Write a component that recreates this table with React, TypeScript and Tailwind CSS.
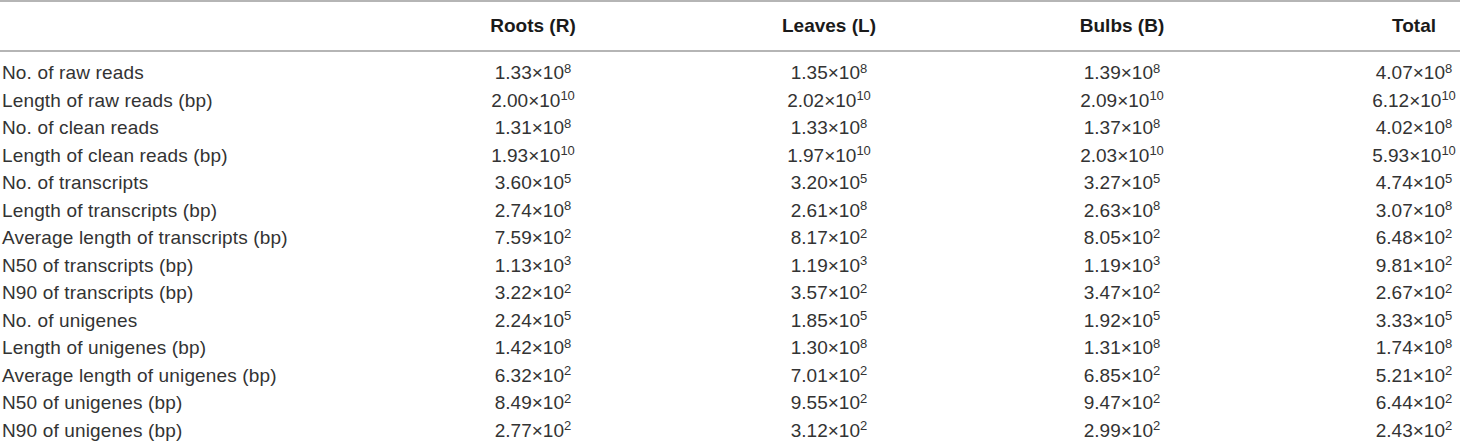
import React from 'react'

interface Row {
  label: string
  values: [string, string][]
}

// mantissa, exponent pairs for Roots, Leaves, Bulbs, Total
const rows: Row[] = [
  { label: 'No. of raw reads', values: [['1.33', '8'], ['1.35', '8'], ['1.39', '8'], ['4.07', '8']] },
  { label: 'Length of raw reads (bp)', values: [['2.00', '10'], ['2.02', '10'], ['2.09', '10'], ['6.12', '10']] },
  { label: 'No. of clean reads', values: [['1.31', '8'], ['1.33', '8'], ['1.37', '8'], ['4.02', '8']] },
  { label: 'Length of clean reads (bp)', values: [['1.93', '10'], ['1.97', '10'], ['2.03', '10'], ['5.93', '10']] },
  { label: 'No. of transcripts', values: [['3.60', '5'], ['3.20', '5'], ['3.27', '5'], ['4.74', '5']] },
  { label: 'Length of transcripts (bp)', values: [['2.74', '8'], ['2.61', '8'], ['2.63', '8'], ['3.07', '8']] },
  { label: 'Average length of transcripts (bp)', values: [['7.59', '2'], ['8.17', '2'], ['8.05', '2'], ['6.48', '2']] },
  { label: 'N50 of transcripts (bp)', values: [['1.13', '3'], ['1.19', '3'], ['1.19', '3'], ['9.81', '2']] },
  { label: 'N90 of transcripts (bp)', values: [['3.22', '2'], ['3.57', '2'], ['3.47', '2'], ['2.67', '2']] },
  { label: 'No. of unigenes', values: [['2.24', '5'], ['1.85', '5'], ['1.92', '5'], ['3.33', '5']] },
  { label: 'Length of unigenes (bp)', values: [['1.42', '8'], ['1.30', '8'], ['1.31', '8'], ['1.74', '8']] },
  { label: 'Average length of unigenes (bp)', values: [['6.32', '2'], ['7.01', '2'], ['6.85', '2'], ['5.21', '2']] },
  { label: 'N50 of unigenes (bp)', values: [['8.49', '2'], ['9.55', '2'], ['9.47', '2'], ['6.44', '2']] },
  { label: 'N90 of unigenes (bp)', values: [['2.77', '2'], ['3.12', '2'], ['2.99', '2'], ['2.43', '2']] },
]

const headers = ['Roots (R)', 'Leaves (L)', 'Bulbs (B)', 'Total']

const gridCols = 'grid grid-cols-[385px_296px_296px_290px_1fr]'

const App: React.FC = () => {
  return (
    <div className="w-[1460px] h-[445px] bg-white font-['Liberation_Sans',Arial,sans-serif] text-[19px] overflow-hidden">
      {/* Header */}
      <div className={`${gridCols} border-t-2 border-b-2 border-[#b5b5b5] h-[52px] items-center`}>
        <div />
        {headers.map((h, i) => (
          <div
            key={h}
            className={`text-center font-bold text-[#1a1a1a] ${i === 3 ? 'pl-[101px]' : ''}`}
          >
            {h}
          </div>
        ))}
      </div>

      {/* Body */}
      <div className="pt-[7px]">
        {rows.map((row) => (
          <div key={row.label} className={`${gridCols} h-[27.5px] items-center text-[#333333]`}>
            <div className="pl-[2px] whitespace-nowrap tracking-[0.15px]">{row.label}</div>
            {row.values.map(([m, e], i) => (
              <div key={i} className={`text-center whitespace-nowrap ${i === 3 ? 'pl-[101px]' : ''}`}>
                {m}×10<sup className="text-[13px]">{e}</sup>
              </div>
            ))}
          </div>
        ))}
      </div>
    </div>
  )
}

export default App
